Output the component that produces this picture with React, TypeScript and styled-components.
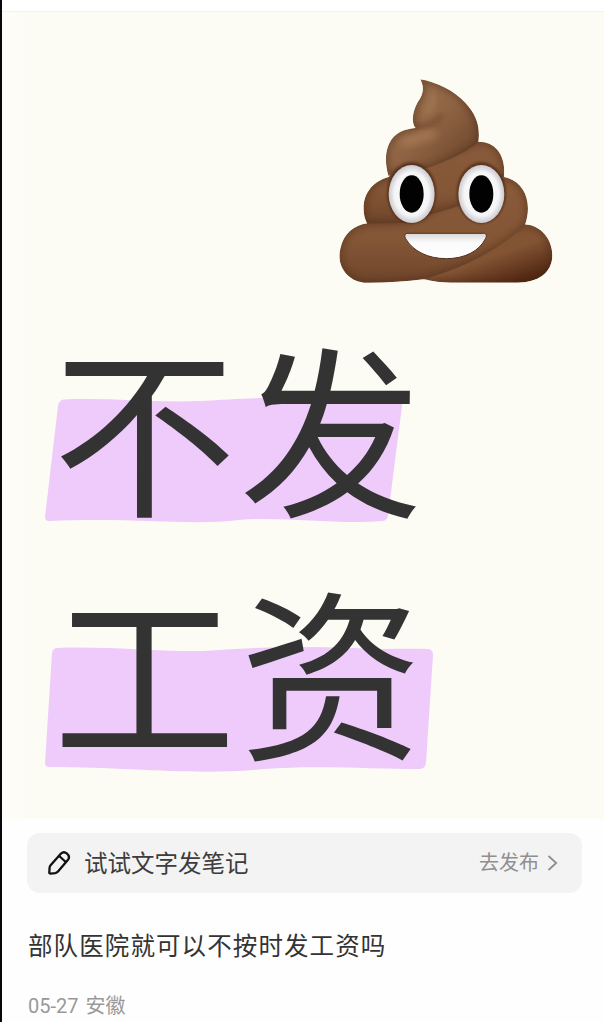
import React from "react";
import styled, { createGlobalStyle } from "styled-components";

const GlobalStyle = createGlobalStyle`
  * { box-sizing: border-box; }
  html, body { margin: 0; padding: 0; background: #fff; }
  body { font-family: Roboto, "Noto Sans CJK SC", sans-serif; overflow: hidden; }
`;

const Page = styled.main`
  width: 604px;
  height: 1022px;
  border-left: 2px solid #08080c;
  background: #fefefe;
  overflow: hidden;
  display: flex;
  flex-direction: column;
`;

const TopStrip = styled.div`
  flex: none;
  height: 12px;
  border-bottom: 1px solid #f5f2ee;
  background: #fff;
`;

const Poster = styled.section`
  flex: none;
  height: 807px;
  background: linear-gradient(90deg, #fdfcf9 0, #fdfcf4 24px);
  display: flex;
  flex-direction: column;
`;

const EmojiRow = styled.div`
  display: flex;
  justify-content: flex-end;
  height: 288px;
  padding: 65px 49px 0 0;
`;

const Headline = styled.h1`
  margin: 0;
  display: flex;
  flex-direction: column;
  padding-left: 42px;
`;

const HeadlineRow = styled.div`
  display: grid;
  height: 249px;
  & > * { grid-area: 1 / 1; }
`;

const HeadlineText = styled.span<{ $lineHeight: number }>`
  padding-left: 9px;
  font: 400 183px/${(p) => p.$lineHeight}px "Noto Sans CJK SC", sans-serif;
  letter-spacing: 3.5px;
  color: #333;
  white-space: nowrap;
`;

const Marker = styled.svg`
  width: 400px;
  height: 249px;
  display: block;
`;

const PublishBar = styled.div`
  flex: none;
  margin: 14px 22px 0 25px;
  height: 60px;
  border-radius: 13px;
  background: #f3f3f3;
  display: flex;
  align-items: center;
  padding: 0 23px 0 20px;
`;

const BarLabel = styled.span`
  flex: 1;
  margin-left: 12px;
  padding-top: 1px;
  font-size: 23.5px;
  line-height: 34px;
  color: #3c3c3c;
`;

const BarAction = styled.span`
  font-size: 20px;
  line-height: 30px;
  color: #8f8f8f;
  margin-right: 7px;
`;

const Title = styled.p`
  margin: 34px 0 0 26px;
  font-size: 24.5px;
  letter-spacing: 1.1px;
  line-height: 40px;
  color: #333;
  white-space: nowrap;
`;

const Meta = styled.p`
  margin: 24px 0 0 26px;
  font-size: 20px;
  line-height: 30px;
  color: #999;
  display: flex;
  gap: 7px;
`;

const swirl =
  "M300 57C350 66 400 90 435 127C470 165 480 200 474 246C440 275 385 302 322 323C275 325 235 325 205 348C190 300 197 262 213 238C230 215 255 206 286 203C272 188 276 155 292 126C310 102 312 80 300 57Z";
const upper =
  "M474 244C525 243 558 285 551 350C520 395 470 422 415 437C385 448 358 453 330 463C305 480 275 490 240 488L141 491C118 450 125 372 205 350C240 300 400 280 474 244Z";
const middle =
  "M551 350C612 362 638 425 614 494C540 565 440 620 310 657C250 664 190 668 130 667C75 660 48 610 60 565C70 520 100 495 141 489L240 486C300 480 330 440 415 420Z";
const base =
  "M614 492C665 496 697 540 696 588C694 638 652 667 592 667L390 667C355 667 335 662 310 657C250 650 420 560 614 492Z";

type LobeProps = { id: string; d: string; fill: string };

function Lobe({ id, d, fill }: LobeProps) {
  return (
    <g clipPath={`url(#clip-${id})`}>
      <path d={d} fill={`url(#${fill})`} />
      <path d={d} fill="none" stroke="#482615" strokeWidth="15" opacity=".5" filter="url(#soft)" />
    </g>
  );
}

function Eye({ cx }: { cx: number }) {
  return (
    <g>
      <ellipse cx={cx} cy="398" rx="74" ry="92" fill="#42200f" opacity=".65" filter="url(#softSmall)" />
      <ellipse cx={cx} cy="401" rx="69" ry="87" fill="url(#eyeFill)" />
      <ellipse cx={cx} cy="401" rx="36" ry="56" fill="#020202" />
    </g>
  );
}

function PoopEmoji() {
  return (
    <svg width="218" height="208" viewBox="50 50 654 624" role="img" aria-label="大便">
      <defs>
        <linearGradient id="browns" x1="0" y1="0" x2="1" y2="1">
          <stop offset="0" stopColor="#a07854" />
          <stop offset=".5" stopColor="#8e6343" />
          <stop offset="1" stopColor="#633c24" />
        </linearGradient>
        <linearGradient id="brownUpper" x1="0" y1="0" x2="0" y2="1">
          <stop offset="0" stopColor="#8a5b3c" />
          <stop offset=".6" stopColor="#835636" />
          <stop offset="1" stopColor="#6f452b" />
        </linearGradient>
        <linearGradient id="brownBase" x1="0" y1="0" x2=".8" y2="1">
          <stop offset="0" stopColor="#845636" />
          <stop offset=".6" stopColor="#835434" />
          <stop offset="1" stopColor="#4d2410" />
        </linearGradient>
        <radialGradient id="eyeFill">
          <stop offset="0" stopColor="#fff" />
          <stop offset=".75" stopColor="#f5f5f7" />
          <stop offset="1" stopColor="#c9c9cf" />
        </radialGradient>
        <linearGradient id="smile" x1="0" y1="0" x2="0" y2="1">
          <stop offset="0" stopColor="#d8d6d6" />
          <stop offset=".35" stopColor="#fafafa" />
          <stop offset="1" stopColor="#fff" />
        </linearGradient>
        <filter id="soft" x="-20%" y="-20%" width="140%" height="140%">
          <feGaussianBlur stdDeviation="9" />
        </filter>
        <filter id="glow" x="-50%" y="-50%" width="200%" height="200%">
          <feGaussianBlur stdDeviation="13" />
        </filter>
        <filter id="softSmall" x="-20%" y="-20%" width="140%" height="140%">
          <feGaussianBlur stdDeviation="3" />
        </filter>
        <clipPath id="clip-swirl"><path d={swirl} /></clipPath>
        <clipPath id="clip-upper"><path d={upper} /></clipPath>
        <clipPath id="clip-middle"><path d={middle} /></clipPath>
        <clipPath id="clip-base"><path d={base} /></clipPath>
      </defs>
      <path d="M240 480L420 425L540 360L600 480L400 600L250 560Z" fill="#70462b" />
      <Lobe id="base" d={base} fill="brownBase" />
      <Lobe id="middle" d={middle} fill="brownUpper" />
      <Lobe id="upper" d={upper} fill="brownUpper" />
      <Lobe id="swirl" d={swirl} fill="browns" />
      <g clipPath="url(#clip-swirl)">
        <path d="M278 200C315 206 345 190 366 164" fill="none" stroke="#5f3920" strokeWidth="12" opacity=".6" filter="url(#soft)" />
        <path d="M245 252C275 232 310 232 345 218" fill="none" stroke="#b58a62" strokeWidth="26" opacity=".6" filter="url(#glow)" />
        <path d="M335 100C342 125 330 145 314 162" fill="none" stroke="#b08860" strokeWidth="22" opacity=".5" filter="url(#glow)" />
      </g>
      <Eye cx={274} />
      <Eye cx={483} />
      <path d="M263 519H489C498 519 500 525 496 534C477 573 432 595 378 595C324 595 278 573 256 535C251 525 254 519 263 519Z" fill="url(#smile)" stroke="#52301d" strokeWidth="3" />
    </svg>
  );
}

function PencilIcon() {
  return (
    <svg width="25" height="26" viewBox="0 0 25 26" fill="none" stroke="#111" strokeWidth="2.3" strokeLinejoin="round" strokeLinecap="round">
      <path d="M2.3 22.2L2.6 17.6Q2.7 16.2 3.6 15.2L14 3.6Q16.8 1 20 3.6Q23.4 6.5 21 9.8L11 21.6Q9.8 23 8.2 23.2L3.6 23.6Q2.2 23.6 2.3 22.2Z" />
      <path d="M12.2 6L18.8 12" />
    </svg>
  );
}

function ChevronIcon() {
  return (
    <svg width="13" height="18" viewBox="0 0 13 18" fill="none" stroke="#8f8f8f" strokeWidth="1.8">
      <path d="M2.5 2L10.2 9L2.5 16" />
    </svg>
  );
}

export default function App() {
  return (
    <>
      <GlobalStyle />
      <Page>
        <TopStrip />
        <Poster>
          <EmojiRow>
            <PoopEmoji />
          </EmojiRow>
          <Headline>
            <HeadlineRow>
              <Marker viewBox="0 0 400 249" fill="#eecbfa">
                <path d="M20 99.5C65 97.5 110 103 155 101C195 99 220 97 258 98C300 97 330 103 354 101Q358 101 358 106L344 216Q343 221 338 221C292 225 240 216 195 220C145 226 90 217 5 221Q1 221 1 217L14 106Q15 100 20 99.5Z" />
              </Marker>
              <HeadlineText $lineHeight={248}>不发</HeadlineText>
            </HeadlineRow>
            <HeadlineRow>
              <Marker viewBox="0 0 400 249" fill="#eecbfa">
                <path d="M13 99C60 97 115 103 160 102C210 98 260 97 310 99C335 101 360 99 384 100Q389 100 389 106L382 214Q381 220 375 220C330 220 270 216 220 220C150 227 90 218 5 218Q1 218 1 214L8 104Q9 99 13 99Z" />
              </Marker>
              <HeadlineText $lineHeight={235}>工资</HeadlineText>
            </HeadlineRow>
          </Headline>
        </Poster>
        <PublishBar>
          <PencilIcon />
          <BarLabel>试试文字发笔记</BarLabel>
          <BarAction>去发布</BarAction>
          <ChevronIcon />
        </PublishBar>
        <Title>部队医院就可以不按时发工资吗</Title>
        <Meta>
          <span>05-27</span>
          <span>安徽</span>
        </Meta>
      </Page>
    </>
  );
}
